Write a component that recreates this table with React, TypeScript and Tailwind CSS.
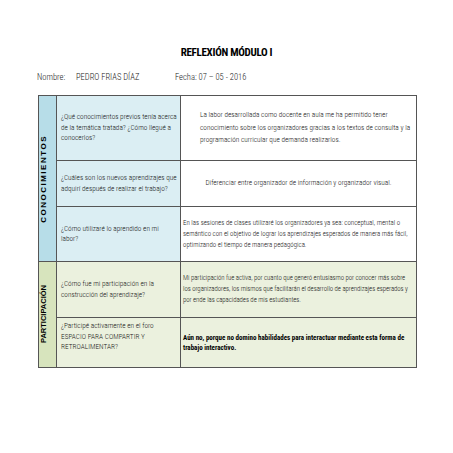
const font = { fontFamily: '"Roboto Condensed", "Liberation Sans", sans-serif' };
const label = { fontFamily: '"Liberation Sans", sans-serif' };

export default function App() {
  return (
    <div className="w-[453px] h-[453px] bg-white text-[#222]" style={font}>
      <div className="pt-[45px] text-center font-bold text-[11px] leading-[16px] tracking-[-0.3px] text-black">REFLEXIÓN MÓDULO I</div>
      <div className="flex mt-[10px] ml-[37px] text-[8.5px] leading-[12px] text-[#222] font-light">
        <span className="w-[39px]">Nombre:</span>
        <span className="w-[99px]">PEDRO FRIAS DÍAZ</span>
        <span>Fecha: 07 – 05 - 2016</span>
      </div>
      <table className="ml-[38px] mt-[12px] w-[378px] border-collapse border border-[#666] table-fixed text-[7.3px] leading-[10.5px] text-[#1a1a1a] font-light">
        <colgroup>
          <col className="w-[18px]" />
          <col className="w-[124px]" />
          <col className="w-[236px]" />
        </colgroup>
        <tbody>
          <tr className="h-[65px]">
            <td rowSpan={3} className="bg-[#b7dde8] border border-[#555] p-0 align-middle">
              <div className="[writing-mode:vertical-rl] rotate-180 mx-auto font-bold text-[8px] tracking-[1.5px] text-black" style={label}>CONOCIMIENTOS</div>
            </td>
            <td className="bg-[#dbeef3] border border-[#555] pl-[4px] pr-[2px] align-middle">
              ¿Qué conocimientos previos tenía acerca de la temática tratada? ¿Cómo llegué a conocerlos?
            </td>
            <td className="bg-white border border-[#555] pl-[19px] pr-[3px] align-middle text-[7.3px] leading-[12.5px]">
              La labor desarrollada como docente en aula me ha permitido tener conocimiento sobre los organizadores gracias a los textos de consulta y la programación curricular que demanda realizarlos.
            </td>
          </tr>
          <tr className="h-[46px]">
            <td className="bg-[#dbeef3] border border-[#555] pl-[4px] pr-[2px] align-middle">
              ¿Cuáles son los nuevos aprendizajes que adquirí después de realizar el trabajo?
            </td>
            <td className="bg-white border border-[#555] px-[4px] align-middle text-center">
              Diferenciar entre organizador de información y organizador visual.
            </td>
          </tr>
          <tr className="h-[55px]">
            <td className="bg-[#dbeef3] border border-[#555] pl-[4px] pr-[16px] align-middle">
              ¿Cómo utilizaré lo aprendido en mi labor?
            </td>
            <td className="bg-white border border-[#555] px-[2px] align-middle text-[6.9px] leading-[11px]">
              En las sesiones de clases utilizaré los organizadores ya sea: conceptual, mental o semántico con el objetivo de lograr los aprendizajes esperados de manera más fácil, optimizando el tiempo de manera pedagógica.
            </td>
          </tr>
          <tr className="h-[56px]">
            <td rowSpan={2} className="bg-[#d7e4bd] border border-[#555] p-0 align-middle">
              <div className="[writing-mode:vertical-rl] rotate-180 mx-auto font-bold text-[7.5px] text-black" style={label}>PARTICIPACIÓN</div>
            </td>
            <td className="bg-[#ebf1de] border border-[#555] pl-[4px] pr-[2px] align-middle">
              ¿Cómo fue mi participación en la construcción del aprendizaje?
            </td>
            <td className="bg-[#ebf1de] border border-[#555] pl-[2px] pr-[1px] align-middle whitespace-nowrap overflow-hidden text-[6.8px] tracking-[-0.05px] leading-[11px]">
              Mi participación fue activa, por cuanto que generó entusiasmo por conocer más sobre
              <br />
              los organizadores, los mismos que facilitarán el desarrollo de aprendizajes esperados y
              <br />
              por ende las capacidades de mis estudiantes.
            </td>
          </tr>
          <tr className="h-[50px]">
            <td className="bg-[#ebf1de] border border-[#555] pl-[4px] pr-[12px] align-top pt-[3px]">
              ¿Participé activamente en el foro ESPACIO PARA COMPARTIR Y RETROALIMENTAR?
            </td>
            <td className="bg-[#ebf1de] border border-[#555] px-[2px] align-middle font-bold text-black text-[7px] leading-[10px]">
              Aún no, porque no domino habilidades para interactuar mediante esta forma de trabajo interactivo.
            </td>
          </tr>
        </tbody>
      </table>
    </div>
  );
}
